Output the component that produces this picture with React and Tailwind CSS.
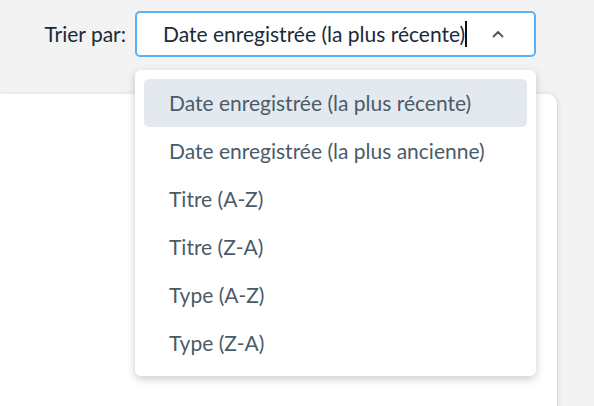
import React from 'react';

const options = [
  'Date enregistrée (la plus récente)',
  'Date enregistrée (la plus ancienne)',
  'Titre (A-Z)',
  'Titre (Z-A)',
  'Type (A-Z)',
  'Type (Z-A)',
];

export default function App() {
  return (
    <div
      className="h-[406px] w-[594px] overflow-hidden bg-[#f3f3f3]"
      style={{ fontFamily: 'Lato, "Open Sans", sans-serif' }}
    >
      <div className="flex items-center justify-end gap-[9px] pr-[58px] pt-[11px]">
        <span className="text-[21px] text-[#1b2a3a]">Trier par:</span>
        <div className="relative z-10 w-[401px]">
          <div className="flex h-[46px] items-center rounded-[5px] border-2 border-[#55b3f6] bg-white pl-[26px] pr-[30px]">
            <span className="text-[21px] text-[#1b2a3a]">Date enregistrée (la plus récente)</span>
            <span className="h-[26px] w-[2px] bg-[#111]" />
            <svg className="ml-auto" width="12" height="8" viewBox="0 0 12 8" fill="none">
              <path d="M1.5 6.5 6 2l4.5 4.5" stroke="#4b5563" strokeWidth="1.8" strokeLinecap="round" strokeLinejoin="round" />
            </svg>
          </div>
          <ul className="absolute left-0 top-[59px] w-full rounded-[6px] bg-white p-[9px] shadow-[0_3px_8px_rgba(15,23,42,0.22)]">
            {options.map((o, i) => (
              <li
                key={o}
                className={
                  'flex h-[48px] items-center rounded-[5px] pl-[25px] text-[21px] text-[#4a5b69] ' +
                  (i === 0 ? 'bg-[#e4e9f0]' : '')
                }
              >
                {o}
              </li>
            ))}
          </ul>
        </div>
      </div>
      <div className="mt-[37px] h-[400px] w-[558px] rounded-tr-[10px] border-r border-[#dcdcdc] bg-white shadow-[0_0_6px_rgba(0,0,0,0.08)]" />
    </div>
  );
}
